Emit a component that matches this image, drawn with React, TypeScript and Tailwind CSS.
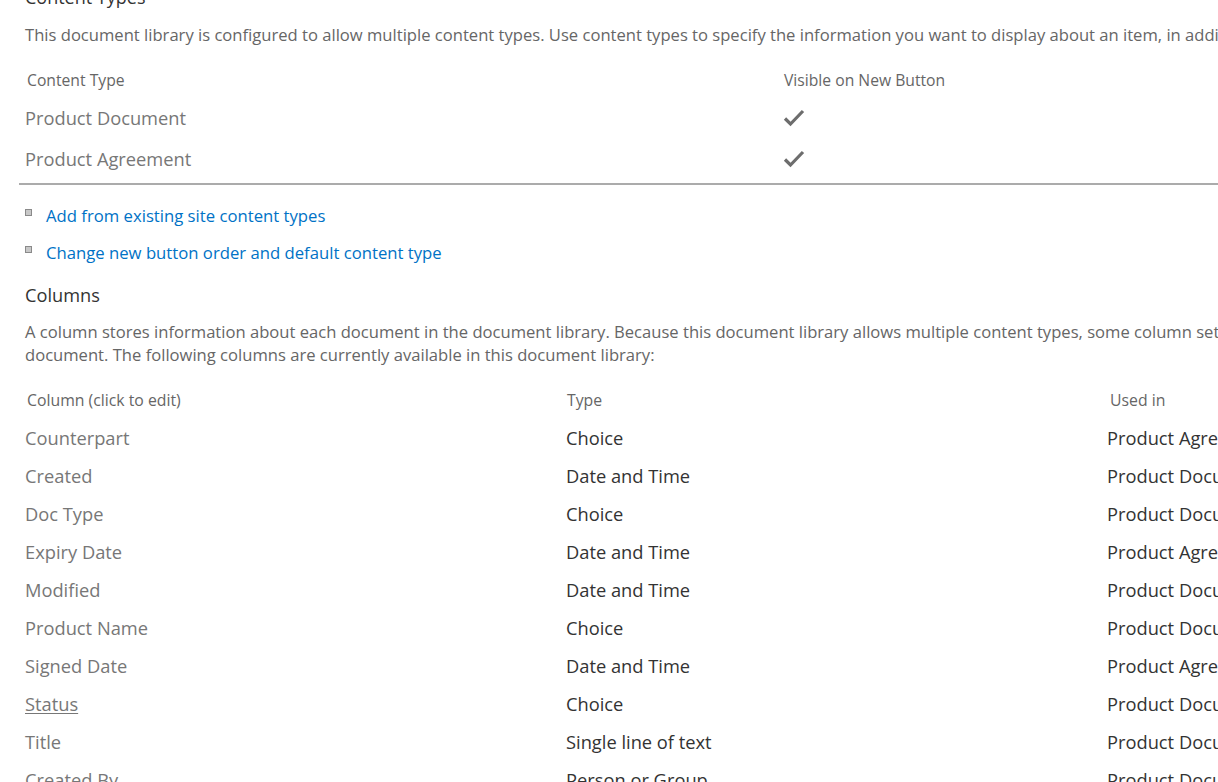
import React from "react";

const font = { fontFamily: '"Open Sans", "Noto Sans", Arial, sans-serif' };

const columns: { name: string; type: string; usedIn: string; underline?: boolean }[] = [
  { name: "Counterpart", type: "Choice", usedIn: "Product Agreement" },
  { name: "Created", type: "Date and Time", usedIn: "Product Document, Product Agreement" },
  { name: "Doc Type", type: "Choice", usedIn: "Product Document" },
  { name: "Expiry Date", type: "Date and Time", usedIn: "Product Agreement" },
  { name: "Modified", type: "Date and Time", usedIn: "Product Document, Product Agreement" },
  { name: "Product Name", type: "Choice", usedIn: "Product Document, Product Agreement" },
  { name: "Signed Date", type: "Date and Time", usedIn: "Product Agreement" },
  { name: "Status", type: "Choice", usedIn: "Product Document, Product Agreement", underline: true },
  { name: "Title", type: "Single line of text", usedIn: "Product Document, Product Agreement" },
  { name: "Created By", type: "Person or Group", usedIn: "Product Document, Product Agreement" },
];

function Check() {
  return (
    <svg width="22" height="18" viewBox="0 0 22 18" className="block">
      <path d="M2 9.5 L7.5 15 L20 2" fill="none" stroke="#6d6d6d" strokeWidth="3.2" />
    </svg>
  );
}

function Bullet() {
  return <span className="mt-[5px] block h-[7px] w-[7px] shrink-0 border border-[#8a8a8a] bg-[#c8c8c8]" />;
}

export default function App() {
  return (
    <div className="h-[782px] w-[1218px] overflow-hidden bg-white" style={font}>
      <div className="w-[1500px] -mt-[15px] pl-[19px]">
        <div className="h-[24px] pl-[6px] text-[18px] leading-[24px] text-[#333]">Content Types</div>
        <p className="mt-[14px] h-[24px] pl-[6px] whitespace-nowrap text-[16.6px] leading-[24px] text-[#666]">
          This document library is configured to allow multiple content types. Use content types to specify the information you want to display about an item, in addition to its policies, workflows, or other behavior.
        </p>

        <div className="mt-[22px] w-[1199px] border-b-2 border-[#ababab] pb-[4px]">
          <div className="flex h-[24px] items-center text-[15.7px] text-[#666]">
            <div className="w-[765px] pl-[8px]">Content Type</div>
            <div>Visible on New Button</div>
          </div>
          <div className="mt-[4px] flex h-[41px] items-center text-[18.3px] text-[#777]">
            <div className="w-[764px] pl-[6px]">Product Document</div>
            <Check />
          </div>
          <div className="flex h-[41px] items-center text-[18.3px] text-[#777]">
            <div className="w-[764px] pl-[6px]">Product Agreement</div>
            <Check />
          </div>
        </div>

        <ul className="mt-[19px] flex flex-col gap-[13px] pl-[6px] text-[16.7px] leading-[24px] text-[#0072c6]">
          <li className="flex gap-[14px]">
            <Bullet />
            <a>Add from existing site content types</a>
          </li>
          <li className="flex gap-[14px]">
            <Bullet />
            <a>Change new button order and default content type</a>
          </li>
        </ul>

        <div className="mt-[18px] h-[24px] pl-[6px] text-[18.2px] leading-[24px] text-[#333]">Columns</div>
        <div className="mt-[13px] pl-[6px] whitespace-nowrap text-[16.6px] leading-[23px] text-[#666]">
          <p>
            A column stores information about each document in the document library. Because this document library allows multiple content types, some column settings, such as whether information is required or optional for a column, are now specified by the content type of the
          </p>
          <p>document. The following columns are currently available in this document library:</p>
        </div>

        <div className="mt-[22px] pl-[6px]">
          <div className="flex h-[26px] items-center text-[15.8px] text-[#666]">
            <div className="w-[542px] pl-[2px]">Column (click to edit)</div>
            <div className="w-[541px]">Type</div>
            <div className="pl-[2px]">Used in</div>
          </div>
          <div className="mt-[5px]">
            {columns.map((c) => (
              <div key={c.name} className="flex h-[38px] items-center whitespace-nowrap text-[18.3px]">
                <div className={"w-[541px] text-[#777]" + (c.underline ? " underline underline-offset-2" : "")}>{c.name}</div>
                <div className="w-[541px] text-[#333]">{c.type}</div>
                <div className="text-[#333]">{c.usedIn}</div>
              </div>
            ))}
          </div>
        </div>
      </div>
    </div>
  );
}
